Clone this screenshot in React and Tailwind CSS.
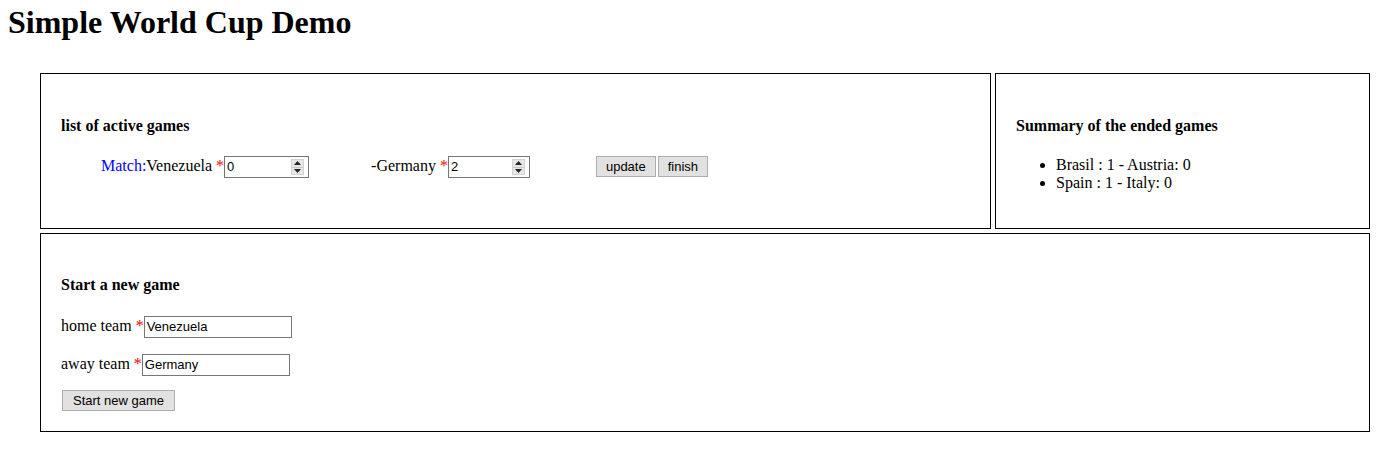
import React from 'react';

const Req = () => <span className="text-[#ff0000]">*</span>;

const NumberBox = ({ value, width }) => (
  <span
    className={`inline-flex items-center h-[22px] border border-[#767676] bg-white pl-[2px] pr-[4px] align-baseline ${width}`}
  >
    <span className="flex-1 font-['Liberation_Sans'] text-[13px] leading-[16px]">{value}</span>
    <span className="flex flex-col w-[13px] h-[16px] border border-[#d4d4d4] bg-[#e6e6e6]">
      <span className="flex-1 flex items-center justify-center border-b border-[#c8c8c8]">
        <svg width="7" height="4" viewBox="0 0 7 4"><path d="M0 4 L3.5 0 L7 4 Z" fill="#222" /></svg>
      </span>
      <span className="flex-1 flex items-center justify-center">
        <svg width="7" height="4" viewBox="0 0 7 4"><path d="M0 0 L3.5 4 L7 0 Z" fill="#222" /></svg>
      </span>
    </span>
  </span>
);

const TextBox = ({ value, width }) => (
  <span
    className={`inline-flex items-center h-[22px] border border-[#767676] bg-white px-[2px] font-['Liberation_Sans'] text-[13px] ${width}`}
  >
    {value}
  </span>
);

const Btn = ({ children, className = '' }) => (
  <button
    className={`h-[21px] px-[9px] border border-[#adadad] bg-[#e1e1e1] font-['Liberation_Sans'] text-[13px] leading-[17px] text-black ${className}`}
  >
    {children}
  </button>
);

const App = () => {
  const ended = ['Brasil : 1 - Austria: 0', 'Spain : 1 - Italy: 0'];

  return (
    <div className="bg-white min-h-[458px] font-['Liberation_Serif',serif] text-[16px] text-black">
      <h1 className="ml-[8px] pt-[4px] text-[32px] font-bold leading-[37px]">Simple World Cup Demo</h1>

      <div className="ml-[40px] mt-[32px] w-[1330px] flex flex-col gap-[4px]">
        <div className="flex gap-[4px]">
          {/* active games */}
          <div className="w-[951px] border border-black px-[20px] pt-[20px]">
            <h4 className="mt-[23px] mb-[19px] font-bold leading-[18px]">list of active games</h4>
            <div className="pl-[40px] flex items-baseline h-[24px]">
              <span className="text-[#0000ff]">Match:</span>
              <span>Venezuela&nbsp;</span>
              <Req />
              <NumberBox value="0" width="w-[85px]" />
              <span className="ml-[62px]">-Germany&nbsp;</span>
              <Req />
              <NumberBox value="2" width="w-[82px]" />
              <Btn className="ml-[66px]">update</Btn>
              <Btn className="ml-[2px]">finish</Btn>
            </div>
          </div>

          {/* summary */}
          <div className="w-[375px] border border-black px-[20px] pt-[20px] pb-[20px]">
            <h4 className="mt-[23px] mb-[21px] font-bold leading-[18px]">Summary of the ended games</h4>
            <ul className="list-disc pl-[40px] mb-[16px] leading-[18px]">
              {ended.map((g) => (
                <li key={g}>{g}</li>
              ))}
            </ul>
          </div>
        </div>

        {/* new game */}
        <div className="border border-black px-[20px] pt-[20px] pb-[19px]">
          <h4 className="mt-[22px] mb-[20px] font-bold leading-[18px]">Start a new game</h4>
          <div className="flex items-baseline">
            <span>home team&nbsp;</span>
            <Req />
            <TextBox value="Venezuela" width="w-[148px]" />
          </div>
          <div className="flex items-baseline mt-[14px]">
            <span>away team&nbsp;</span>
            <Req />
            <TextBox value="Germany" width="w-[148px]" />
          </div>
          <Btn className="mt-[14px] ml-[1px] px-[10px]">Start new game</Btn>
        </div>
      </div>
    </div>
  );
};

export default App;
